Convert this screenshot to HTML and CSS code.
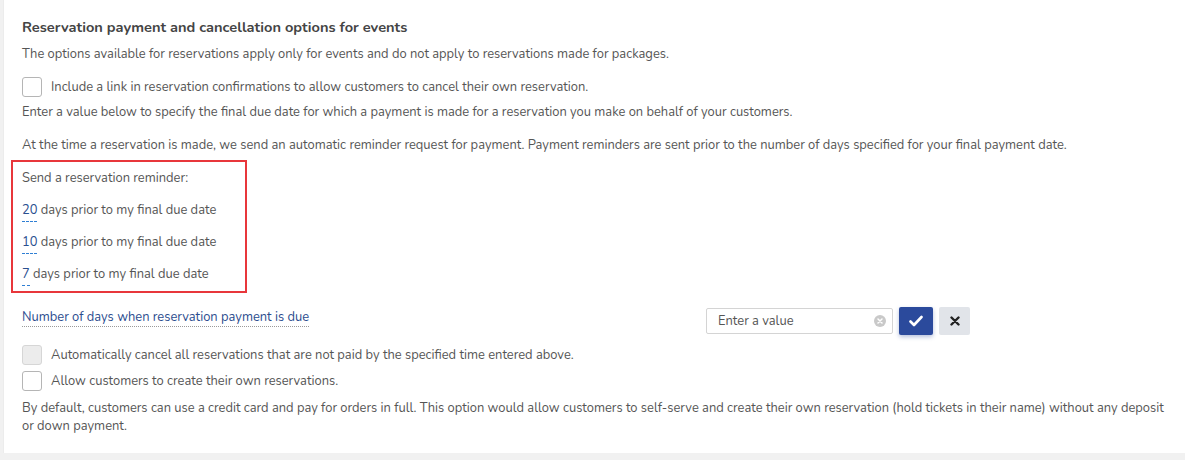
FILE: index.html
```html
<!DOCTYPE html>
<html>
<head>
<meta charset="utf-8">
<link rel="stylesheet" href="styles.css">
</head>
<body>
<div class="page">
  <div class="card">
    <h2 class="title">Reservation payment and cancellation options for events</h2>
    <p class="text desc">The options available for reservations apply only for events and do not apply to reservations made for packages.</p>
    <label class="check-row first">
      <span class="box"></span>
      <span class="text">Include a link in reservation confirmations to allow customers to cancel their own reservation.</span>
    </label>
    <p class="text enter">Enter a value below to specify the final due date for which a payment is made for a reservation you make on behalf of your customers.</p>
    <p class="text attime">At the time a reservation is made, we send an automatic reminder request for payment. Payment reminders are sent prior to the number of days specified for your final payment date.</p>
    <div class="reminders">
      <div class="text rem-title">Send a reservation reminder:</div>
      <div class="text rem"><span class="num">20</span> days prior to my final due date</div>
      <div class="text rem"><span class="num">10</span> days prior to my final due date</div>
      <div class="text rem"><span class="num">7</span> days prior to my final due date</div>
    </div>
    <div class="due-row">
      <div class="due-col"><span class="due-label">Number of days when reservation payment is due</span></div>
      <div class="due-controls">
        <div class="input">
          <span class="placeholder">Enter a value</span>
          <span class="clear">
            <svg width="12" height="12" viewBox="0 0 12 12"><circle cx="6" cy="6" r="6" fill="#c9c9c9"/><path d="M4 4L8 8M8 4L4 8" stroke="#fff" stroke-width="1.5" stroke-linecap="round"/></svg>
          </span>
        </div>
        <button class="btn ok">
          <svg width="14" height="12" viewBox="0 0 14 12"><path d="M1.5 6.5L5 10L12.5 2" fill="none" stroke="#fff" stroke-width="2.6" stroke-linecap="round" stroke-linejoin="round"/></svg>
        </button>
        <button class="btn cancel">
          <svg width="10" height="10" viewBox="0 0 10 10"><path d="M1.5 1.5L8.5 8.5M8.5 1.5L1.5 8.5" stroke="#222" stroke-width="2.4" stroke-linecap="round"/></svg>
        </button>
      </div>
    </div>
    <label class="check-row auto">
      <span class="box disabled"></span>
      <span class="text">Automatically cancel all reservations that are not paid by the specified time entered above.</span>
    </label>
    <label class="check-row allow">
      <span class="box"></span>
      <span class="text">Allow customers to create their own reservations.</span>
    </label>
    <p class="text last">By default, customers can use a credit card and pay for orders in full. This option would allow customers to self-serve and create their own reservation (hold tickets in their name) without any deposit or down payment.</p>
  </div>
</div>
</body>
</html>
```
FILE: styles.css
```css
html, body {
  margin: 0;
  padding: 0;
}
body {
  background: #f1f1f1;
  font-family: "Nunito", "Open Sans", "Liberation Sans", sans-serif;
  color: #555;
  width: 1185px;
  height: 460px;
  overflow: hidden;
}
.page {
  padding-left: 3px;
}
.card {
  background: #fff;
  border-left: 1px solid #ececec;
  height: 453px;
  box-sizing: border-box;
  padding: 18px 0 0 18px;
}
.title {
  margin: 0;
  font-size: 14.6px;
  font-weight: 700;
  color: #444;
  line-height: 18px;
}
.text {
  font-size: 12.9px;
  line-height: 18px;
  color: #555;
}
p { margin: 0; }
.desc { margin-top: 9px; }
.check-row {
  display: flex;
  align-items: center;
  gap: 9px;
}
.box {
  width: 18px;
  height: 18px;
  border: 1px solid #b5b5b5;
  border-radius: 3px;
  background: #fff;
  flex: none;
}
.box.disabled {
  background: #ececec;
  border-color: #d6d6d6;
}
.first { margin-top: 14px; }
.enter { margin-top: 6px; }
.attime { margin-top: 15px; }
.reminders {
  margin-top: 6px;
  margin-left: -11px;
  width: 236px;
  height: 133px;
  box-sizing: border-box;
  border: 2px solid #e8363b;
  padding: 7px 0 0 9px;
}
.rem-title { margin-bottom: 14px; }
.rem { margin-bottom: 14px; }
.num {
  color: #2a4f8f;
  border-bottom: 1px dashed #2f7fd4;
  display: inline-block;
  line-height: 18px;
  padding-bottom: 2px;
  margin-bottom: -3px;
}
.due-row {
  display: flex;
  align-items: center;
  margin-top: 9px;
  height: 28px;
}
.due-col {
  width: 684px;
  flex: none;
}
.due-label {
  font-size: 12.9px;
  color: #2b4c8e;
  border-bottom: 1px dotted #9a9a9a;
  line-height: 17px;
  display: inline-block;
}
.due-controls {
  display: flex;
  align-items: center;
  gap: 6px;
  margin-top: 9px;
}
.input {
  width: 187px;
  height: 26px;
  box-sizing: border-box;
  border: 1px solid #d4d4d4;
  border-radius: 2px;
  display: flex;
  align-items: center;
  justify-content: space-between;
  padding: 0 6px 0 11px;
}
.placeholder {
  font-size: 12.9px;
  color: #555;
}
.clear { display: flex; }
.btn {
  height: 28px;
  border: none;
  border-radius: 2px;
  display: flex;
  align-items: center;
  justify-content: center;
  padding: 0;
}
.ok {
  width: 34px;
  background: #2b4a9c;
  box-shadow: 0 2px 4px rgba(43,74,156,0.35);
}
.cancel {
  width: 31px;
  background: #e1e4e9;
}
.auto { margin-top: 15px; }
.allow { margin-top: 6px; }
.last {
  margin-top: 8px;
  width: 1150px;
}
```
